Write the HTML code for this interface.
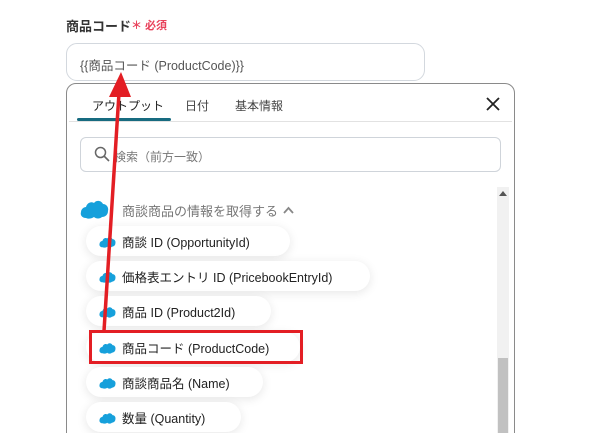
<!DOCTYPE html>
<html style="height:433px;overflow:hidden"><head><meta charset="utf-8"><style>
*{box-sizing:border-box;margin:0;padding:0}
body{width:611px;height:433px;background:#fff;position:relative;overflow:hidden;font-family:"Liberation Sans","Noto Sans CJK JP",sans-serif;color:#222}
.abs{position:absolute}
.lbl{left:66px;top:16px;font-size:13px;font-weight:bold;color:#333}
.req{left:131px;top:17px;font-size:11px;color:#e8415a;font-weight:bold}
.inp{left:66px;top:43px;width:359px;height:38px;border:1px solid #d3d8de;border-radius:11px;font-size:12.5px;color:#555;padding:11px 13px}
.panel{left:66px;top:83px;width:449px;height:360px;border:1px solid #8a8a8a;border-radius:10px;background:#fff}
.tab{font-size:12px;top:97px;color:#444}
.pill{left:86px;height:30px;border-radius:15px;background:#fff;box-shadow:0 2px 10px rgba(0,0,0,.10);font-size:12.5px;color:#222;padding:6px 0 0 36px;white-space:nowrap}
.cl{position:absolute;left:13px;top:10px}
</style></head><body>
<div class="abs lbl">商品コード</div>
<div class="abs req">＊ 必須</div>
<div class="abs inp">{{商品コード (ProductCode)}}</div>
<div class="abs panel"></div>
<div class="abs tab" style="left:92px;color:#222">アウトプット</div>
<div class="abs tab" style="left:185px">日付</div>
<div class="abs tab" style="left:235px">基本情報</div>
<div class="abs" style="left:77px;top:118px;width:94px;height:3px;background:#176b80;border-radius:2px"></div>
<div class="abs" style="left:69px;top:121px;width:443px;height:1px;background:#e2e2e2"></div>
<svg class="abs" style="left:486px;top:97px" width="14" height="14"><path d="M1 1L13 13M13 1L1 13" stroke="#222" stroke-width="1.8"/></svg>
<div class="abs" style="left:80px;top:137px;width:421px;height:35px;border:1px solid #cfd4da;border-radius:6px"></div>
<svg class="abs" style="left:94px;top:146px" width="16" height="16"><circle cx="6.5" cy="6.5" r="5" fill="none" stroke="#666" stroke-width="1.5"/><path d="M10 10L15 15" stroke="#666" stroke-width="1.6"/></svg>
<div class="abs" style="left:114px;top:148px;font-size:12px;color:#777">検索（前方一致）</div>
<div class="abs" style="left:497px;top:187px;width:12px;height:250px;background:#f1f1f1"></div>
<svg class="abs" style="left:499px;top:191px" width="8" height="6"><path d="M0 5L4 0L8 5Z" fill="#555"/></svg>
<div class="abs" style="left:498px;top:358px;width:10px;height:80px;background:#c1c1c1"></div>
<svg class="abs" style="left:80px;top:199px" width="29" height="20" viewBox="0 0 29 20"><path d="M6 19C2 19 0 16 1 13C1 10 4 8 6 8C7 4 11 2 14 4C16 1 21 1 23 5C26 5 29 8 28 12C28 16 25 18 22 18C20 20 16 20 14 18C11 20 8 20 6 19Z" fill="#16a0db"/></svg>
<div class="abs" style="left:122px;top:201px;font-size:13px;color:#777">商談商品の情報を取得する</div>
<svg class="abs" style="left:283px;top:206px" width="11" height="8"><path d="M1 7L5.5 2L10 7" fill="none" stroke="#888" stroke-width="1.8"/></svg>

<div class="abs pill" style="top:226px;width:204px"><svg class="cl" width="17" height="12" viewBox="0 0 29 20"><path d="M6 19C2 19 0 16 1 13C1 10 4 8 6 8C7 4 11 2 14 4C16 1 21 1 23 5C26 5 29 8 28 12C28 16 25 18 22 18C20 20 16 20 14 18C11 20 8 20 6 19Z" fill="#16a0db"/></svg>商談 ID (OpportunityId)</div>
<div class="abs pill" style="top:261px;width:284px"><svg class="cl" width="17" height="12" viewBox="0 0 29 20"><path d="M6 19C2 19 0 16 1 13C1 10 4 8 6 8C7 4 11 2 14 4C16 1 21 1 23 5C26 5 29 8 28 12C28 16 25 18 22 18C20 20 16 20 14 18C11 20 8 20 6 19Z" fill="#16a0db"/></svg>価格表エントリ ID (PricebookEntryId)</div>
<div class="abs pill" style="top:296px;width:185px"><svg class="cl" width="17" height="12" viewBox="0 0 29 20"><path d="M6 19C2 19 0 16 1 13C1 10 4 8 6 8C7 4 11 2 14 4C16 1 21 1 23 5C26 5 29 8 28 12C28 16 25 18 22 18C20 20 16 20 14 18C11 20 8 20 6 19Z" fill="#16a0db"/></svg>商品 ID (Product2Id)</div>
<div class="abs pill" style="top:332px;width:214px"><svg class="cl" width="17" height="12" viewBox="0 0 29 20"><path d="M6 19C2 19 0 16 1 13C1 10 4 8 6 8C7 4 11 2 14 4C16 1 21 1 23 5C26 5 29 8 28 12C28 16 25 18 22 18C20 20 16 20 14 18C11 20 8 20 6 19Z" fill="#16a0db"/></svg>商品コード (ProductCode)</div>
<div class="abs pill" style="top:367px;width:177px"><svg class="cl" width="17" height="12" viewBox="0 0 29 20"><path d="M6 19C2 19 0 16 1 13C1 10 4 8 6 8C7 4 11 2 14 4C16 1 21 1 23 5C26 5 29 8 28 12C28 16 25 18 22 18C20 20 16 20 14 18C11 20 8 20 6 19Z" fill="#16a0db"/></svg>商談商品名 (Name)</div>
<div class="abs pill" style="top:402px;width:155px"><svg class="cl" width="17" height="12" viewBox="0 0 29 20"><path d="M6 19C2 19 0 16 1 13C1 10 4 8 6 8C7 4 11 2 14 4C16 1 21 1 23 5C26 5 29 8 28 12C28 16 25 18 22 18C20 20 16 20 14 18C11 20 8 20 6 19Z" fill="#16a0db"/></svg>数量 (Quantity)</div>
<div class="abs" style="left:89px;top:330px;width:214px;height:34px;border:3px solid #e31e24"></div>
<svg class="abs" style="left:0;top:0" width="611" height="433"><path d="M104 331L119 93" stroke="#e31e24" stroke-width="3.5"/><path d="M121 72L109 97L131 97Z" fill="#e31e24"/></svg>
</body></html>
